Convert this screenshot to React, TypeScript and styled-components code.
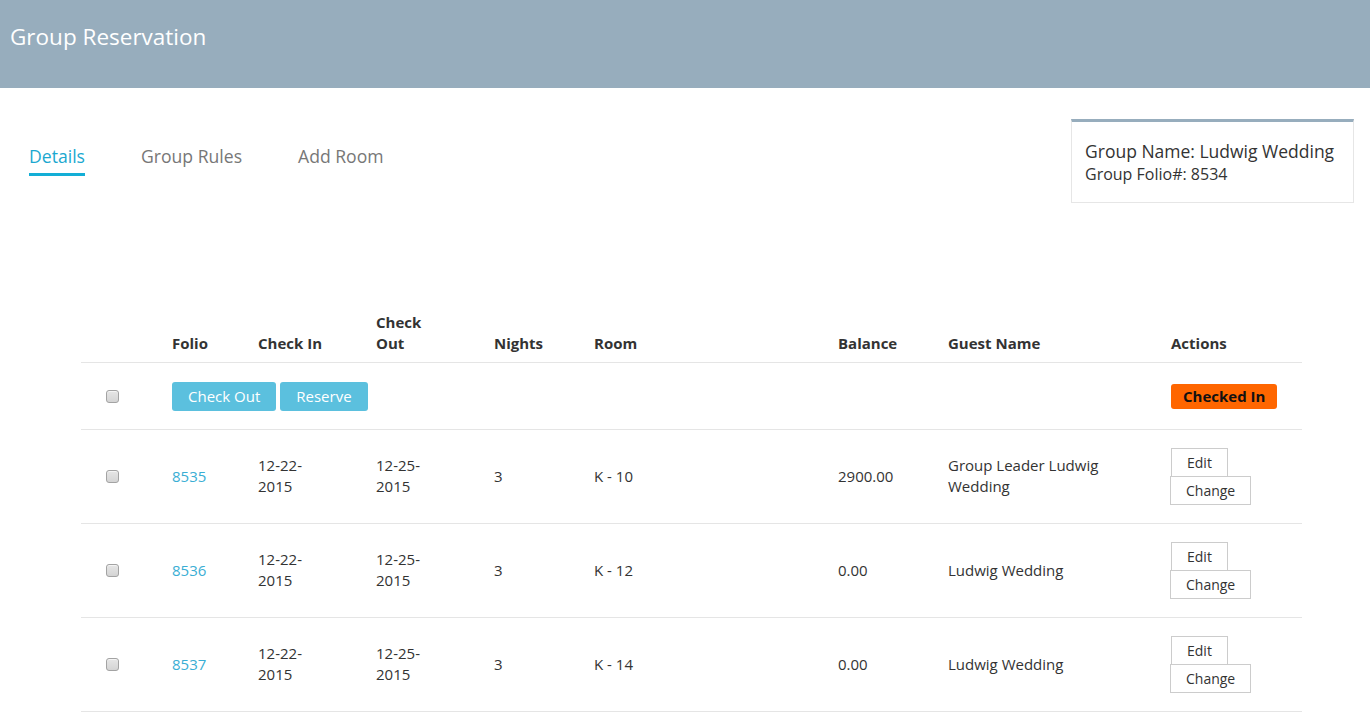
import React from 'react';
import styled, { createGlobalStyle } from 'styled-components';

const GlobalStyle = createGlobalStyle`
  * {
    margin: 0;
    padding: 0;
    box-sizing: border-box;
  }

  html, body {
    width: 100%;
    height: 100%;
    overflow: hidden;
    background: #fff;
    color: #333;
    font-family: "Open Sans", "Noto Sans", "Liberation Sans", sans-serif;
    font-size: 15px;
    line-height: 1.42857;
  }

  input, select, textarea, button {
    font-family: inherit;
  }
`;

const Page = styled.div`
  width: 100%;
  height: 100%;
`;

const Header = styled.header`
  height: 88px;
  background-color: #97adbd;
  padding: 20px 10px 0;
`;

const Title = styled.h1`
  color: #fff;
  font-size: 22.5px;
  font-weight: 400;
  line-height: 34px;
`;

const TopSection = styled.div`
  display: flex;
  justify-content: space-between;
  align-items: flex-start;
`;

const Tabs = styled.nav`
  display: flex;
  gap: 56px;
  margin: 56px 0 0 29px;
`;

const Tab = styled.a<{ $active?: boolean }>`
  font-size: 17.6px;
  line-height: 25px;
  padding-bottom: 4px;
  color: ${(p) => (p.$active ? '#1ba8d0' : '#777')};
  border-bottom: 3px solid ${(p) => (p.$active ? '#13aed6' : 'transparent')};
  text-decoration: none;
  cursor: pointer;
`;

const GroupCard = styled.div`
  width: 283px;
  margin: 31px 16px 0 0;
  padding: 17px 13px;
  border: 1px solid #e6e6e6;
  border-top: 3px solid #97adbd;
`;

const GroupName = styled.div`
  font-size: 17.5px;
  line-height: 24px;
  color: #333;
  white-space: nowrap;
`;

const GroupFolio = styled.div`
  font-size: 16px;
  line-height: 22px;
  color: #333;
`;

const Table = styled.table`
  width: 1221px;
  margin: 101px 0 0 81px;
  border-collapse: collapse;
  table-layout: fixed;
`;

const Th = styled.th`
  text-align: left;
  vertical-align: bottom;
  font-weight: 700;
  padding: 8px 8px 7px;
  border-bottom: 1px solid #e5e5e5;
  color: #333;
`;

const Td = styled.td<{ $first?: boolean }>`
  vertical-align: middle;
  padding: 18px 8px 18px ${(p) => (p.$first ? '25px' : '8px')};
  border-bottom: 1px solid #e5e5e5;
  color: #333;
`;

const ToolbarRow = styled.tr`
  & > td {
    padding-top: 19px;
  }
`;

const Narrow = styled.div<{ $max: number }>`
  max-width: ${(p) => p.$max}px;
`;

const Check = styled.input.attrs({ type: 'checkbox' })`
  appearance: none;
  display: block;
  width: 13px;
  height: 13px;
  margin: 0;
  border: 1px solid #a3a3a3;
  border-radius: 3px;
  background: linear-gradient(#e6e6e6, #d4d4d4);
  box-shadow: inset 0 1px 0 #f4f4f4;
  cursor: pointer;
`;

const FolioLink = styled.a`
  color: #3aaed4;
  text-decoration: none;
`;

const InfoButton = styled.button`
  background-color: #5bc0de;
  color: #fff;
  border: none;
  border-radius: 3px;
  font-size: 15px;
  line-height: 21px;
  padding: 4px 16px;
  margin-right: 4px;
  cursor: pointer;
`;

const Badge = styled.span`
  display: inline-block;
  background-color: #ff6600;
  color: #111;
  font-weight: 700;
  border-radius: 3px;
  font-size: 15px;
  line-height: 21px;
  padding: 2px 12px;
`;

const ActionStack = styled.div`
  display: flex;
  flex-direction: column;
  align-items: flex-start;
`;

const PlainButton = styled.button<{ $shift?: boolean }>`
  background: #fff;
  color: #333;
  border: 1px solid #ccc;
  font-size: 14px;
  line-height: 19px;
  padding: 4px 15px;
  margin: ${(p) => (p.$shift ? '-1px 0 0 -1px' : '0')};
  cursor: pointer;
`;

type Row = {
  folio: string;
  checkIn: string;
  checkOut: string;
  nights: number;
  room: string;
  balance: string;
  guest: string;
};

const rows: Row[] = [
  { folio: '8535', checkIn: '12-22-2015', checkOut: '12-25-2015', nights: 3, room: 'K - 10', balance: '2900.00', guest: 'Group Leader Ludwig Wedding' },
  { folio: '8536', checkIn: '12-22-2015', checkOut: '12-25-2015', nights: 3, room: 'K - 12', balance: '0.00', guest: 'Ludwig Wedding' },
  { folio: '8537', checkIn: '12-22-2015', checkOut: '12-25-2015', nights: 3, room: 'K - 14', balance: '0.00', guest: 'Ludwig Wedding' },
];

const App: React.FC = () => {
  return (
    <>
      <GlobalStyle />
      <Page>
        <Header>
          <Title>Group Reservation</Title>
        </Header>
        <TopSection>
          <Tabs>
            <Tab $active>Details</Tab>
            <Tab>Group Rules</Tab>
            <Tab>Add Room</Tab>
          </Tabs>
          <GroupCard>
            <GroupName>Group Name: Ludwig Wedding</GroupName>
            <GroupFolio>Group Folio#: 8534</GroupFolio>
          </GroupCard>
        </TopSection>

        <Table>
          <colgroup>
            <col style={{ width: 83 }} />
            <col style={{ width: 86 }} />
            <col style={{ width: 118 }} />
            <col style={{ width: 118 }} />
            <col style={{ width: 100 }} />
            <col style={{ width: 244 }} />
            <col style={{ width: 110 }} />
            <col style={{ width: 223 }} />
            <col style={{ width: 139 }} />
          </colgroup>
          <thead>
            <tr>
              <Th />
              <Th>Folio</Th>
              <Th>Check In</Th>
              <Th>
                <Narrow $max={70}>Check Out</Narrow>
              </Th>
              <Th>Nights</Th>
              <Th>Room</Th>
              <Th>Balance</Th>
              <Th>Guest Name</Th>
              <Th>Actions</Th>
            </tr>
          </thead>
          <tbody>
            <ToolbarRow>
              <Td $first>
                <Check />
              </Td>
              <Td colSpan={7}>
                <InfoButton>Check Out</InfoButton>
                <InfoButton>Reserve</InfoButton>
              </Td>
              <Td>
                <Badge>Checked In</Badge>
              </Td>
            </ToolbarRow>
            {rows.map((r) => (
              <tr key={r.folio}>
                <Td $first>
                  <Check />
                </Td>
                <Td>
                  <FolioLink>{r.folio}</FolioLink>
                </Td>
                <Td>
                  <Narrow $max={70}>{r.checkIn}</Narrow>
                </Td>
                <Td>
                  <Narrow $max={70}>{r.checkOut}</Narrow>
                </Td>
                <Td>{r.nights}</Td>
                <Td>{r.room}</Td>
                <Td>{r.balance}</Td>
                <Td>
                  <Narrow $max={165}>{r.guest}</Narrow>
                </Td>
                <Td>
                  <ActionStack>
                    <PlainButton>Edit</PlainButton>
                    <PlainButton $shift>Change</PlainButton>
                  </ActionStack>
                </Td>
              </tr>
            ))}
          </tbody>
        </Table>
      </Page>
    </>
  );
};

export default App;
